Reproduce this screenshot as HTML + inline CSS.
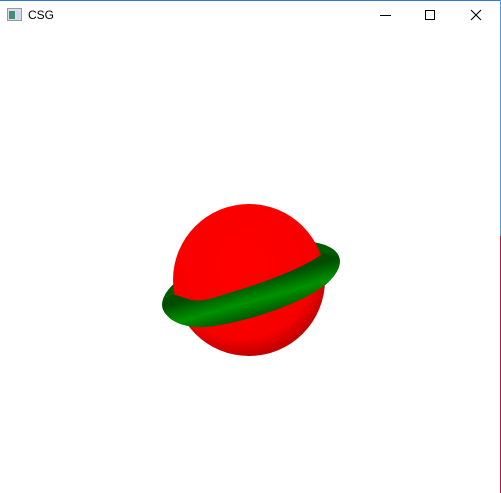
<!DOCTYPE html>
<html><head><meta charset="utf-8"><style>
html,body{margin:0;padding:0;background:#fff;}
body{width:501px;height:493px;position:relative;overflow:hidden;font-family:"Liberation Sans",sans-serif;}
.top{position:absolute;left:0;top:0;width:501px;height:1px;background:#2b7cd3;}
.rb{position:absolute;left:500px;top:0;width:1px;height:236px;background:#4a9de0;}
.rr{position:absolute;left:500px;top:236px;width:1px;height:257px;background:#c0154a;}
.title{position:absolute;left:28px;top:8px;font-size:12px;color:#000;}
</style></head><body>
<div class="top"></div><div class="rb"></div><div class="rr"></div>
<svg style="position:absolute;left:7px;top:8px" width="15" height="13"><rect x="0.5" y="0.5" width="14" height="12" fill="#dde" stroke="#999"/><rect x="2" y="3" width="6" height="8" fill="#4a8a7a"/><rect x="9" y="3" width="4" height="8" fill="#cde"/></svg>
<div class="title">CSG</div>
<svg style="position:absolute;left:0;top:0" width="501" height="493">
<line x1="380" y1="15.5" x2="391" y2="15.5" stroke="#000" stroke-width="1"/>
<rect x="425.5" y="10.5" width="9" height="9" fill="none" stroke="#000"/>
<path d="M471 10 L481 20 M481 10 L471 20" stroke="#000" stroke-width="1.1"/>
<defs>
<radialGradient id="s" cx="0.45" cy="0.4" r="0.62">
<stop offset="0" stop-color="#ff0000"/><stop offset="0.78" stop-color="#f80000"/><stop offset="1" stop-color="#b80000"/></radialGradient>
<linearGradient id="g" x1="244" y1="284" x2="254" y2="320" gradientUnits="userSpaceOnUse">
<stop offset="0" stop-color="#004c00"/><stop offset="0.5" stop-color="#009200"/><stop offset="1" stop-color="#004c00"/></linearGradient>
</defs>
<g transform="translate(251,283) rotate(-16)">
<ellipse rx="92" ry="35" fill="#005a00"/>
</g>
<circle cx="249" cy="280" r="76" fill="url(#s)"/>
<path d="M163,308 C167,322 185,328 205,327 C240,324 300,305 325,285 C335,277 341,266 339,257 L324,253 C300,270 262,283 232,292 C214,298 202,302 192,300 C182,298 177,294 172,295 C166,297 162,302 163,308 Z" fill="url(#g)"/>
</svg>
</body></html>
